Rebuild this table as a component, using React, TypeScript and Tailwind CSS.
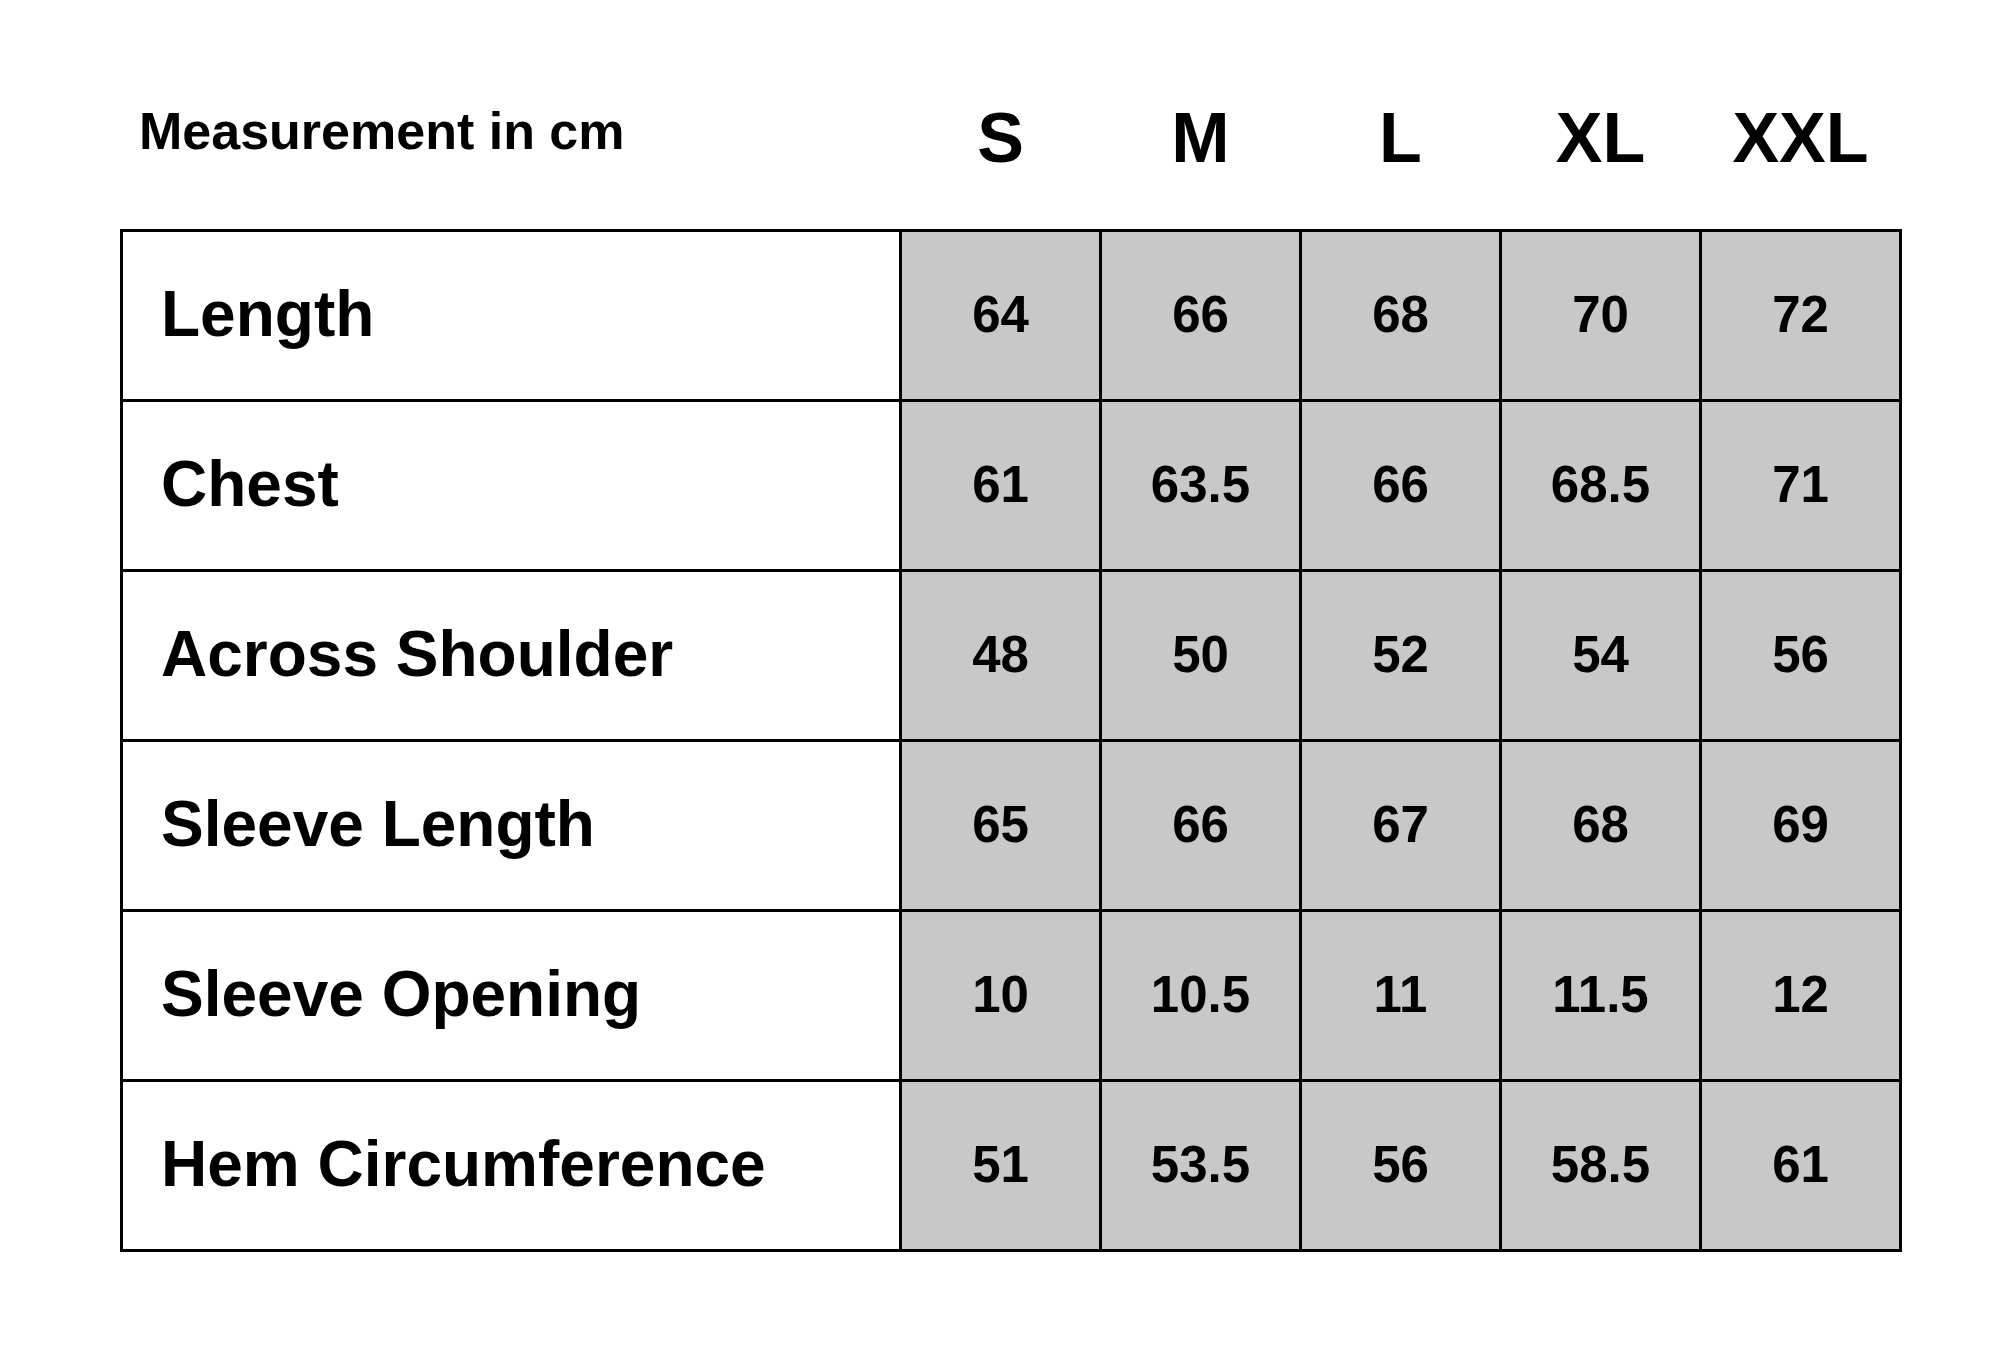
const sizes = ["S", "M", "L", "XL", "XXL"];

const rows: { label: string; values: string[] }[] = [
  { label: "Length", values: ["64", "66", "68", "70", "72"] },
  { label: "Chest", values: ["61", "63.5", "66", "68.5", "71"] },
  { label: "Across Shoulder", values: ["48", "50", "52", "54", "56"] },
  { label: "Sleeve Length", values: ["65", "66", "67", "68", "69"] },
  { label: "Sleeve Opening", values: ["10", "10.5", "11", "11.5", "12"] },
  { label: "Hem Circumference", values: ["51", "53.5", "56", "58.5", "61"] },
];

export default function App() {
  return (
    <div className="w-[2000px] h-[1370px] bg-white text-black font-['Liberation_Sans',Arial,sans-serif] font-bold">
      <div className="pl-[120px] pt-[103px]">
        {/* header */}
        <div className="grid grid-cols-[776px_repeat(5,197px)] gap-x-[3px] px-[3px] items-start">
          <div className="pl-[16px] pt-[2px] text-[52px] leading-none">Measurement in cm</div>
          {sizes.map((s) => (
            <div key={s} className="text-center text-[70px] leading-none">
              {s}
            </div>
          ))}
        </div>

        {/* table */}
        <div className="mt-[56px] w-[1782px] grid grid-cols-[776px_repeat(5,197px)] auto-rows-[167px] gap-[3px] p-[3px] bg-black">
          {rows.map((row) => (
            <div key={row.label} className="contents">
              <div className="bg-white flex items-center pl-[38px] pb-[4px] text-[64px] leading-none">
                {row.label}
              </div>
              {row.values.map((v, i) => (
                <div
                  key={i}
                  className="bg-[#c8c8c8] flex items-center justify-center pb-[3px] text-[51px] leading-none"
                >
                  {v}
                </div>
              ))}
            </div>
          ))}
        </div>
      </div>
    </div>
  );
}
